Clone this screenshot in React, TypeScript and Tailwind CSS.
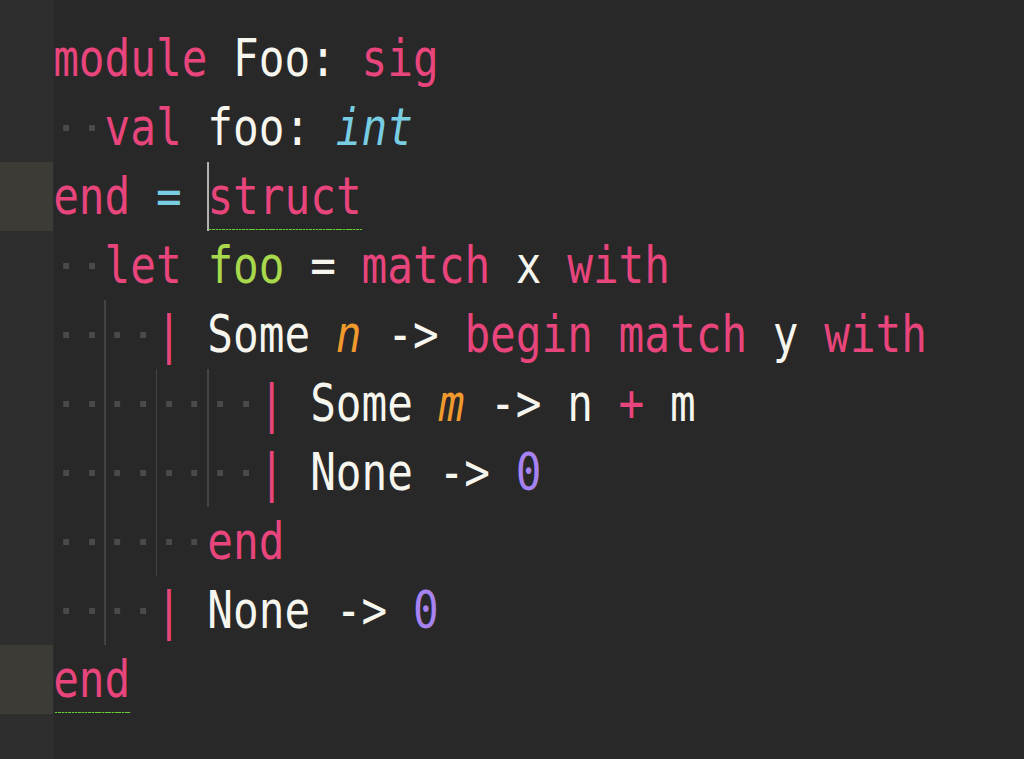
import React from "react";

type Tok = { t: string; c: string; mark?: "cursor" | "match" };

const P = "text-[#e8457c]";
const W = "text-[#f6f6ef]";
const C = "text-[#78cde3]";
const G = "text-[#a8d84c]";
const O = "text-[#f09a2e] italic";
const V = "text-[#a783f2]";

const lines: { indent: number; guides: number[]; toks: Tok[]; active?: boolean }[] = [
  {
    indent: 0,
    guides: [],
    toks: [
      { t: "module", c: P },
      { t: " Foo: ", c: W },
      { t: "sig", c: P },
    ],
  },
  {
    indent: 2,
    guides: [],
    toks: [
      { t: "val", c: P },
      { t: " foo: ", c: W },
      { t: "int", c: C + " italic" },
    ],
  },
  {
    indent: 0,
    guides: [],
    active: true,
    toks: [
      { t: "end", c: P },
      { t: " ", c: W },
      { t: "=", c: C },
      { t: " ", c: W },
      { t: "struct", c: P, mark: "cursor" },
    ],
  },
  {
    indent: 2,
    guides: [],
    toks: [
      { t: "let", c: P },
      { t: " ", c: W },
      { t: "foo", c: G },
      { t: " = ", c: W },
      { t: "match", c: P },
      { t: " x ", c: W },
      { t: "with", c: P },
    ],
  },
  {
    indent: 4,
    guides: [2],
    toks: [
      { t: "|", c: P },
      { t: " Some ", c: W },
      { t: "n", c: O },
      { t: " -> ", c: W },
      { t: "begin", c: P },
      { t: " ", c: W },
      { t: "match", c: P },
      { t: " y ", c: W },
      { t: "with", c: P },
    ],
  },
  {
    indent: 8,
    guides: [2, 4, 6],
    toks: [
      { t: "|", c: P },
      { t: " Some ", c: W },
      { t: "m", c: O },
      { t: " -> n ", c: W },
      { t: "+", c: P },
      { t: " m", c: W },
    ],
  },
  {
    indent: 8,
    guides: [2, 4, 6],
    toks: [
      { t: "|", c: P },
      { t: " None -> ", c: W },
      { t: "0", c: V },
    ],
  },
  {
    indent: 6,
    guides: [2, 4],
    toks: [{ t: "end", c: P }],
  },
  {
    indent: 4,
    guides: [2],
    toks: [
      { t: "|", c: P },
      { t: " None -> ", c: W },
      { t: "0", c: V },
    ],
  },
  {
    indent: 0,
    guides: [],
    active: true,
    toks: [{ t: "end", c: P, mark: "match" }],
  },
];

// leading whitespace: a dot per space, plus an indent guide on even columns
function Space({ guide }: { guide: boolean }) {
  return (
    <span className="relative w-[1ch] self-stretch flex items-center justify-center">
      {guide && <span className="absolute left-0 top-0 h-full w-[1.3px] bg-[#4b4b4b]" />}
      <span className="w-[7px] h-[6px] bg-[#4a4a4a]" />
    </span>
  );
}

function Token({ tok }: { tok: Tok }) {
  if (!tok.mark) return <span className={tok.c}>{tok.t}</span>;
  return (
    <span className={"relative " + tok.c}>
      {tok.t}
      {tok.mark === "cursor" && (
        <span className="absolute left-0 top-0 h-full w-[2px] bg-[#cfcfc8]" />
      )}
      <span className="absolute left-[2px] right-0 bottom-[1px] h-[1px] bg-[repeating-linear-gradient(90deg,#66cc33_0px,#66cc33_3px,#3a5a2a_3px,#3a5a2a_4px)]" />
    </span>
  );
}

export default function App() {
  return (
    <div className="w-[1024px] h-[759px] bg-[#282828] flex overflow-hidden">
      <div className="w-[53px] shrink-0 bg-[#2e2e2e] flex flex-col">
        <div className="h-[24px]" />
        {lines.map((l, i) => (
          <div key={i} className={"h-[69px] " + (l.active ? "bg-[#3c3b35]" : "")} />
        ))}
      </div>
      <div className="flex-1 flex flex-col border-l border-[#2c2c2c]">
        <div className="h-[24px]" />
        <div className="origin-left [transform:scaleX(0.837)] font-['DejaVu_Sans_Mono',monospace] text-[51px] whitespace-pre">
          {lines.map((l, i) => (
            <div key={i} className="flex h-[69px] leading-[69px] -ml-px">
              {Array.from({ length: l.indent }).map((_, k) => (
                <Space key={k} guide={l.guides.includes(k)} />
              ))}
              {l.toks.map((tok, k) => (
                <Token key={k} tok={tok} />
              ))}
            </div>
          ))}
        </div>
      </div>
    </div>
  );
}
